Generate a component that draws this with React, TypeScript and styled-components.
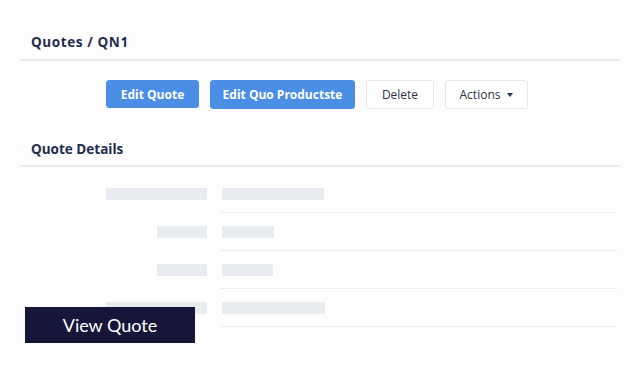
import React from "react";
import styled, { createGlobalStyle } from "styled-components";

const Global = createGlobalStyle`
  html, body { margin: 0; padding: 0; background: #fdfdfe; }
  body { font-family: "Open Sans", "Liberation Sans", sans-serif; }
`;

const Page = styled.div`
  position: relative;
  width: 640px;
  height: 368px;
  padding: 0 20px;
  box-sizing: border-box;
  overflow: hidden;
`;

const SectionTitle = styled.div<{ $top: number; $bottom: number; $spacing?: number }>`
  padding: ${(p) => p.$top}px 0 ${(p) => p.$bottom}px 11px;
  font-size: 13.5px;
  font-weight: 700;
  letter-spacing: ${(p) => p.$spacing ?? 0}px;
  color: #1e2c4d;
  line-height: 18px;
  border-bottom: 2px solid #e6ebf2;
`;

const Toolbar = styled.div`
  display: flex;
  justify-content: center;
  gap: 11px;
  padding: 19px 6px 0 0;
  height: 30px;
  margin-bottom: 30px;
  align-items: flex-start;
`;

const Btn = styled.button<{ $primary?: boolean; $w: number; $h: number }>`
  width: ${(p) => p.$w}px;
  height: ${(p) => p.$h}px;
  border-radius: 3px;
  font-family: "Open Sans", "Liberation Sans", sans-serif;
  font-size: 12px;
  font-weight: ${(p) => (p.$primary ? 700 : 500)};
  color: ${(p) => (p.$primary ? "#ffffff" : "#2a3345")};
  background: ${(p) => (p.$primary ? "#4a8ee6" : "#ffffff")};
  border: 1px solid ${(p) => (p.$primary ? "#4a8ee6" : "#e4e8ee")};
  display: inline-flex;
  align-items: center;
  justify-content: center;
  gap: 7px;
  padding: 0;
`;

const Caret = styled.span`
  width: 0;
  height: 0;
  border-left: 3.5px solid transparent;
  border-right: 3.5px solid transparent;
  border-top: 4px solid #2a3345;
  margin-top: 1px;
`;

const Details = styled.div`
  padding-top: 8px;
`;

const Row = styled.div`
  display: grid;
  grid-template-columns: 187px 1fr;
  column-gap: 13px;
  margin-right: 3px;
`;

const LabelCell = styled.div`
  display: flex;
  justify-content: flex-end;
  padding: 13px 0 12px;
`;

const ValueCell = styled.div`
  padding: 13px 0 12px 2px;
  border-bottom: 1px solid #e9edf2;
`;

const Bar = styled.div<{ $w: number }>`
  width: ${(p) => p.$w}px;
  height: 12px;
  background: #e8ecf1;
`;

const ViewQuote = styled.div`
  position: absolute;
  left: 25px;
  top: 307px;
  width: 170px;
  height: 36px;
  background: #16163a;
  color: #ffffff;
  font-family: Lato, "Open Sans", sans-serif;
  font-size: 18px;
  font-weight: 400;
  display: flex;
  align-items: center;
  justify-content: center;
`;

const rows = [
  { l: 101, v: 102 },
  { l: 50, v: 52 },
  { l: 50, v: 51 },
  { l: 101, v: 103 },
];

export default function App() {
  return (
    <Page>
      <Global />
      <SectionTitle $top={33} $bottom={8} $spacing={0.6}>Quotes / QN1</SectionTitle>
      <Toolbar>
        <Btn $primary $w={93} $h={28}>Edit Quote</Btn>
        <Btn $primary $w={145} $h={29}>Edit Quo Productste</Btn>
        <Btn $w={68} $h={29}>Delete</Btn>
        <Btn $w={83} $h={29}>
          Actions <Caret />
        </Btn>
      </Toolbar>
      <SectionTitle $top={0} $bottom={7}>Quote Details</SectionTitle>
      <Details>
        {rows.map((r, i) => (
          <Row key={i}>
            <LabelCell>
              <Bar $w={r.l} />
            </LabelCell>
            <ValueCell>
              <Bar $w={r.v} />
            </ValueCell>
          </Row>
        ))}
      </Details>
      <ViewQuote>View Quote</ViewQuote>
    </Page>
  );
}
